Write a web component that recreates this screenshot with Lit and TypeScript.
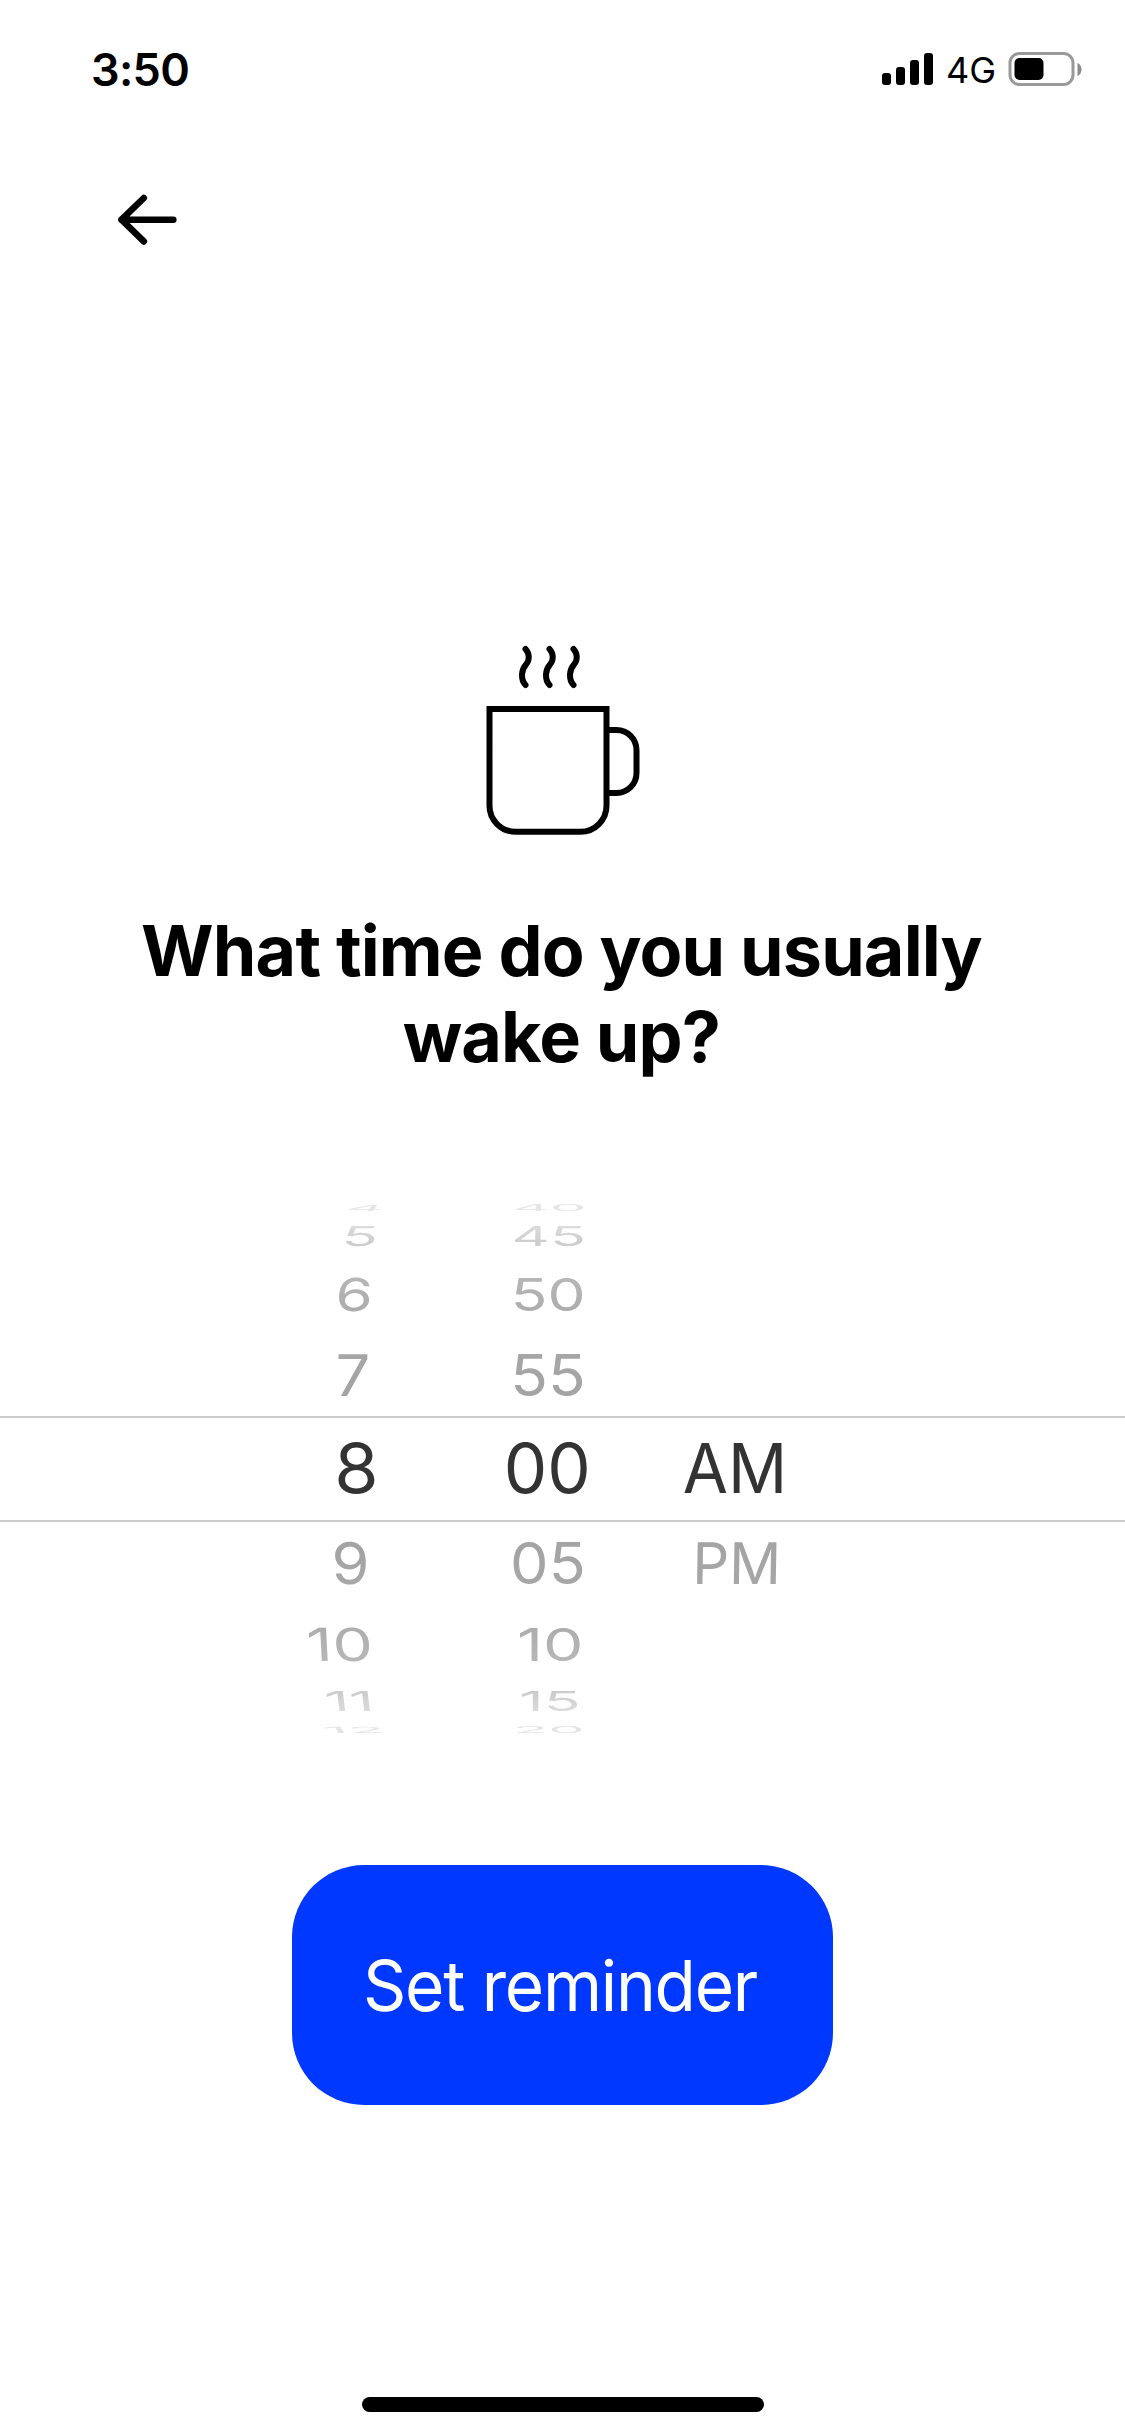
import { LitElement, html, css, svg } from "lit";
import { customElement, property } from "lit/decorators.js";
import { styleMap } from "lit/directives/style-map.js";

interface Item {
  text: string;
  /** Row position relative to the selected row. */
  pos: number;
  dx: number;
  skew?: number;
  sx?: number;
}

// Row height, horizontal and vertical scale by distance from the selected row.
const ROWS = [
  { h: 102, sx: 1, sy: 1 },
  { h: 86, sx: 0.885, sy: 0.83 },
  { h: 76, sx: 0.875, sy: 0.66 },
  { h: 39, sx: 0.86, sy: 0.4 },
  { h: 18, sx: 0.84, sy: 0.125 },
];

const HOURS: Item[] = [
  { text: "4", pos: -4, dx: 10, skew: -35 },
  { text: "5", pos: -3, dx: 5.2, skew: -8 },
  { text: "6", pos: -2, dx: -1, skew: -3 },
  { text: "7", pos: -1, dx: -2, skew: -1 },
  { text: "8", pos: 0, dx: 1, sx: 1.04 },
  { text: "9", pos: 1, dx: -4.8, skew: 1 },
  { text: "10", pos: 2, dx: -15.2, skew: 3, sx: 0.93 },
  { text: "11", pos: 3, dx: -5.8, skew: 7, sx: 0.88 },
  { text: "12", pos: 4, dx: -1.2, skew: 30, sx: 0.88 },
];

const MINUTES: Item[] = [
  { text: "40", pos: -4, dx: 1.5 },
  { text: "45", pos: -3, dx: 0.5 },
  { text: "50", pos: -2, dx: 0.5 },
  { text: "55", pos: -1, dx: 0, sx: 0.9 },
  { text: "00", pos: 0, dx: -0.8 },
  { text: "05", pos: 1, dx: 0.2 },
  { text: "10", pos: 2, dx: 2.4, sx: 0.93 },
  { text: "15", pos: 3, dx: 1.8, sx: 0.88 },
  { text: "20", pos: 4, dx: 1 },
];

const PERIODS: Item[] = [
  { text: "AM", pos: 0, dx: 1, sx: 0.95 },
  { text: "PM", pos: 1, dx: 2.6, skew: -1, sx: 0.835 },
];

@customElement("picker-wheel")
export class PickerWheel extends LitElement {
  @property({ attribute: false }) items: Item[] = [];

  static styles = css`
    :host {
      display: flex;
      flex-direction: column;
      justify-content: center;
      width: 130px;
      height: 545px;
    }
    .row {
      flex: none;
      display: flex;
      align-items: center;
      justify-content: center;
      white-space: nowrap;
      line-height: 50px;
      color: #a3a3a3;
    }
    .selected {
      box-sizing: border-box;
      padding-bottom: 2px;
      color: #333;
    }
  `;

  render() {
    return [-4, -3, -2, -1, 0, 1, 2, 3, 4].map((pos) => {
      const row = ROWS[Math.abs(pos)];
      const item = this.items.find((i) => i.pos === pos);
      const transform = item
        ? `translateX(${item.dx}px) skewX(${item.skew ?? 0}deg) scale(${item.sx ?? row.sx}, ${row.sy})`
        : "none";
      return html`<div class="row ${pos === 0 ? "selected" : ""}" style=${styleMap({ height: `${row.h}px` })}>
        <span style=${styleMap({ display: "block", transform })}>${item?.text ?? ""}</span>
      </div>`;
    });
  }
}

@customElement("status-bar")
export class StatusBar extends LitElement {
  static styles = css`
    :host {
      display: flex;
      align-items: center;
      justify-content: space-between;
      box-sizing: border-box;
      width: 100%;
      height: 138px;
      padding: 0 43px 0 91px;
    }
    .time {
      font-size: 45px;
      font-weight: 600;
      letter-spacing: -0.7px;
    }
    .right {
      display: flex;
      align-items: center;
    }
    .network {
      width: 48px;
      margin: 2px 14px 0 13px;
      font-size: 36px;
      white-space: nowrap;
    }
    svg {
      display: block;
    }
  `;

  render() {
    const bars = [12, 18, 25, 32];
    return html`
      <span class="time">3:50</span>
      <div class="right">
        <svg width="51" height="34" viewBox="882 52 51 34">
          ${bars.map((h, i) => svg`<rect x=${882 + i * 14} y=${85 - h} width="9" height=${h} rx="3" />`)}
        </svg>
        <span class="network">4G</span>
        <svg width="74" height="34" viewBox="1008.5 52 74 34">
          <rect x="1010.5" y="53.5" width="63" height="31" rx="9.5" fill="none" stroke="#999" stroke-width="3" />
          <rect x="1015" y="58" width="29" height="22" rx="5" />
          <path d="M1078 63c2.600 1.100 4 3.600 4 6.500s-1.400 5.400-4 6.500z" fill="#8c8c8c" />
        </svg>
      </div>
    `;
  }
}

@customElement("app-root")
export class AppRoot extends LitElement {
  static styles = css`
    :host {
      display: flex;
      flex-direction: column;
      align-items: center;
      width: 1125px;
      height: 2436px;
      overflow: hidden;
      background: #fff;
      color: #000;
      font-family: Inter, "Liberation Sans", sans-serif;
    }
    svg {
      display: block;
    }
    .nav {
      display: flex;
      align-items: center;
      box-sizing: border-box;
      width: 100%;
      height: 164px;
      padding-left: 117px;
    }
    .mug {
      margin-top: 338px;
    }
    h1 {
      margin: 68px 0 0;
      padding-right: 2px;
      font-size: 70px;
      font-weight: 700;
      line-height: 86px;
      letter-spacing: -0.85px;
      text-align: center;
      white-space: nowrap;
    }
    .picker {
      position: relative;
      width: 100%;
      height: 545px;
      margin-top: 116px;
    }
    .wheels {
      display: flex;
      padding-left: 290px;
      font-size: 69px;
      mask-image: linear-gradient(
        rgba(0, 0, 0, 0.2) 0,
        rgba(0, 0, 0, 0.28) 11px,
        rgba(0, 0, 0, 0.38) 29px,
        rgba(0, 0, 0, 0.57) 50px,
        rgba(0, 0, 0, 0.79) 81px,
        rgba(0, 0, 0, 0.89) 114px,
        rgba(0, 0, 0, 0.96) 158px,
        #000 208px,
        #000 337px,
        rgba(0, 0, 0, 0.96) 387px,
        rgba(0, 0, 0, 0.89) 431px,
        rgba(0, 0, 0, 0.79) 464px,
        rgba(0, 0, 0, 0.57) 495px,
        rgba(0, 0, 0, 0.38) 516px,
        rgba(0, 0, 0, 0.28) 534px
      );
    }
    .minutes {
      margin: 0 56px 0 63px;
    }
    .band {
      position: absolute;
      inset: 220px 0 auto;
      height: 102px;
      border: solid #ccc;
      border-width: 2px 0;
    }
    button {
      width: 541px;
      height: 240px;
      margin: 124px 0 0;
      padding: 0 5px 0 0;
      border: 0;
      border-radius: 72px;
      background: #0038ff;
      color: #fff;
      font: 400 70px Inter, "Liberation Sans", sans-serif;
      letter-spacing: -1.3px;
      white-space: nowrap;
    }
    .label {
      display: block;
      transform: scaleX(0.965);
    }
    .home {
      width: 402px;
      height: 15px;
      margin-top: 292px;
      border-radius: 8px;
      background: #000;
    }
  `;

  render() {
    return html`
      <status-bar></status-bar>
      <nav class="nav">
        <svg width="60" height="60" viewBox="117 190 60 60" fill="none" stroke="#000" stroke-width="6.6" stroke-linecap="round" stroke-linejoin="round">
          <path d="M173.300 219.700H121.500M143.800 198L121.500 219.700L143.800 241.400" />
        </svg>
      </nav>
      <svg class="mug" width="166" height="200" viewBox="479.500 640 166 200" fill="none" stroke="#000" stroke-width="6">
        <path d="M489 709H606V805.500A26 26 0 0 1 580 831.700H515A26 26 0 0 1 489 805.500Z" />
        <path d="M606 730H616A20 20 0 0 1 636 750V773A20 20 0 0 1 616 793H606" />
        ${[0, 24, 48].map(
          (x) => svg`<path transform="translate(${x} 0)" stroke-linecap="round"
            d="M525 649C529 653.500 529.500 660 525.500 664.500C520.500 670 520 679.500 525 685" />`
        )}
      </svg>
      <h1>What time do you usually<br />wake up?</h1>
      <div class="picker">
        <div class="band"></div>
        <div class="wheels">
          <picker-wheel .items=${HOURS}></picker-wheel>
          <picker-wheel class="minutes" .items=${MINUTES}></picker-wheel>
          <picker-wheel .items=${PERIODS}></picker-wheel>
        </div>
      </div>
      <button><span class="label">Set reminder</span></button>
      <div class="home"></div>
    `;
  }
}
